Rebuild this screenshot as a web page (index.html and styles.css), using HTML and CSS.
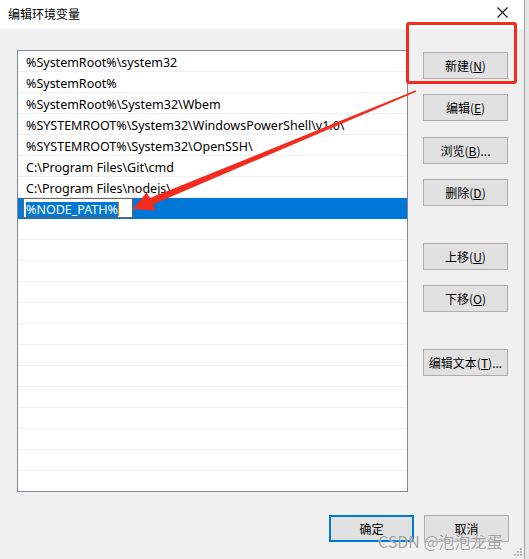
FILE: index.html
```html
<!DOCTYPE html>
<html lang="zh-CN">
<head>
<meta charset="utf-8">
<title>编辑环境变量</title>
<link rel="stylesheet" href="styles.css">
</head>
<body>
<div class="screen">
  <div class="window">
    <div class="titlebar">
      <span class="title">编辑环境变量</span>
      <svg class="close" width="11" height="11" viewBox="0 0 11 11"><path d="M0.5 0.5 L10.5 10.5 M10.5 0.5 L0.5 10.5" stroke="#111" stroke-width="1.1" fill="none"/></svg>
    </div>
    <div class="body">
      <div class="main">
        <div class="list">
          <div class="row">%SystemRoot%\system32</div>
          <div class="row">%SystemRoot%</div>
          <div class="row">%SystemRoot%\System32\Wbem</div>
          <div class="row">%SYSTEMROOT%\System32\WindowsPowerShell\v1.0\</div>
          <div class="row">%SYSTEMROOT%\System32\OpenSSH\</div>
          <div class="row">C:\Program Files\Git\cmd</div>
          <div class="row">C:\Program Files\nodejs\</div>
          <div class="row selected"><span class="editbox"><span class="sel">%NODE_PATH%</span><span class="caret"></span></span></div>
          <div class="row"></div>
          <div class="row"></div>
          <div class="row"></div>
          <div class="row"></div>
          <div class="row"></div>
          <div class="row"></div>
          <div class="row"></div>
          <div class="row"></div>
          <div class="row"></div>
          <div class="row"></div>
          <div class="row"></div>
          <div class="row"></div>
          <div class="row"></div>
        </div>
        <div class="side">
          <div class="btn">新建(<u>N</u>)</div>
          <div class="btn g15">编辑(<u>E</u>)</div>
          <div class="btn g16">浏览(<u>B</u>)...</div>
          <div class="btn g15">删除(<u>D</u>)</div>
          <div class="btn g37">上移(<u>U</u>)</div>
          <div class="btn g15">下移(<u>O</u>)</div>
          <div class="btn g37">编辑文本(<u>T</u>)...</div>
        </div>
      </div>
      <div class="footer">
        <div class="btn default">确定</div>
        <div class="btn">取消</div>
      </div>
    </div>
  </div>
  <div class="edge"></div>
  <div class="highlight"></div>
  <svg class="arrow" width="529" height="559" viewBox="0 0 529 559">
    <polygon points="416.3,91.7 152.8,204.5 155.5,210.5 133,209 146.5,192.5 150.2,198.1 415.7,90.3" fill="#f42b1f"/>
  </svg>
  <div class="watermark">CSDN @泡泡龙蛋</div>
  <svg class="grip" width="9" height="9" viewBox="0 0 9 9" fill="#b8b8b8">
    <rect x="7" y="1" width="2" height="2"/>
    <rect x="4" y="4" width="2" height="2"/><rect x="7" y="4" width="2" height="2"/>
    <rect x="1" y="7" width="2" height="2"/><rect x="4" y="7" width="2" height="2"/><rect x="7" y="7" width="2" height="2"/>
  </svg>
</div>
</body>
</html>
```
FILE: styles.css
```css
html, body {
  margin: 0;
  padding: 0;
}
body {
  font-family: "Noto Sans", "Noto Sans CJK SC", sans-serif;
  font-size: 12.5px;
  color: #000;
  background: #e6e6e6;
}
.screen {
  position: relative;
  width: 529px;
  height: 559px;
  overflow: hidden;
  display: flex;
}
.window {
  width: 524px;
  height: 559px;
  background: #f0f0f0;
  display: flex;
  flex-direction: column;
  flex: none;
}
.edge {
  width: 1px;
  background: #a0a0a0;
  flex: none;
}
.titlebar {
  height: 29px;
  background: #fff;
  display: flex;
  align-items: center;
  justify-content: space-between;
  padding: 0 16px 0 8px;
  flex: none;
}
.title {
  font-family: "Noto Sans CJK SC", sans-serif;
  font-size: 12px;
  position: relative;
  top: -1px;
}
.close {
  display: block;
  margin-top: -4px;
}
.body {
  padding: 21px 15px 0 17px;
  display: flex;
  flex-direction: column;
}
.main {
  display: flex;
  gap: 15px;
}
.list {
  width: 389px;
  height: 440px;
  border: 1px solid #828790;
  background: #fff;
  overflow: hidden;
}
.row {
  height: 20px;
  border-bottom: 1px solid #f0f0f0;
  padding-left: 8px;
  line-height: 24px;
  white-space: nowrap;
  overflow: hidden;
}
.row.selected {
  background: #0078d7;
  padding-left: 5px;
  display: flex;
  align-items: center;
  border-bottom-color: #0078d7;
}
.editbox {
  width: 110px;
  height: 20px;
  border: 1px solid #646464;
  background: #fff;
  display: flex;
  align-items: center;
  padding-left: 2px;
  box-sizing: border-box;
}
.sel {
  background: #0078d7;
  color: #fff;
  line-height: 15px;
  height: 15px;
  position: relative;
  top: 1px;
}
.caret {
  width: 1px;
  height: 14px;
  background: #f57c00;
  position: relative;
  top: 1px;
}
.side {
  display: flex;
  flex-direction: column;
  padding-top: 2px;
}
.btn {
  width: 85px;
  height: 27px;
  box-sizing: border-box;
  background: #e1e1e1;
  border: 1px solid #adadad;
  display: flex;
  align-items: center;
  justify-content: center;
  font-family: "Noto Sans CJK SC", sans-serif;
  font-size: 12px;
}
.btn u {
  text-underline-offset: 1px;
}
.g15 { margin-top: 15px; }
.g16 { margin-top: 16px; }
.g37 { margin-top: 37px; }
.footer {
  display: flex;
  justify-content: flex-end;
  gap: 10px;
  margin-top: 23px;
}
.btn.default {
  border: 2px solid #0078d7;
}
.highlight {
  position: absolute;
  left: 406px;
  top: 22px;
  width: 105px;
  height: 56px;
  border: 3px solid #f42b1f;
  border-radius: 3px;
}
.arrow {
  position: absolute;
  left: 0;
  top: 0;
  pointer-events: none;
}
.watermark {
  position: absolute;
  left: 378px;
  top: 529px;
  font-family: "Noto Sans CJK SC", sans-serif;
  font-size: 16px;
  color: #9a9a9a;
  opacity: 0.9;
  text-shadow: 0 0 1px #fff;
  white-space: nowrap;
}
.grip {
  position: absolute;
  left: 513px;
  top: 547px;
}
```
